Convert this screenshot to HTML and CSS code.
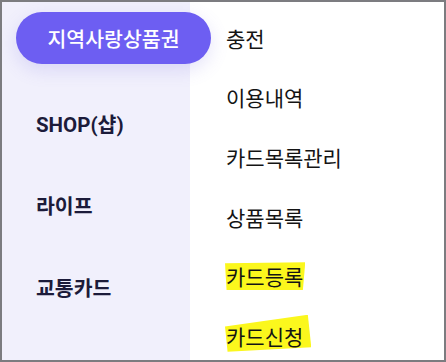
FILE: index.html
```html
<!DOCTYPE html>
<html lang="ko">
<head>
<meta charset="utf-8">
<link rel="stylesheet" href="styles.css">
</head>
<body>
<div class="frame">
  <nav class="side">
    <div class="pill">지역사랑상품권</div>
    <div class="side-item">SHOP(샵)</div>
    <div class="side-item">라이프</div>
    <div class="side-item">교통카드</div>
  </nav>
  <ul class="menu">
    <li class="menu-item">충전</li>
    <li class="menu-item">이용내역</li>
    <li class="menu-item">카드목록관리</li>
    <li class="menu-item">상품목록</li>
    <li class="menu-item"><span class="mark mark-a">카드등록</span></li>
    <li class="menu-item"><span class="mark mark-b">카드신청</span></li>
  </ul>
</div>
</body>
</html>
```

FILE: styles.css
```css
html, body {
  margin: 0;
  padding: 0;
  background: #ffffff;
}
body {
  font-family: "Roboto", "Noto Sans CJK KR", sans-serif;
}
.frame {
  box-sizing: border-box;
  width: 446px;
  height: 362px;
  border: 2px solid #7c7c80;
  display: grid;
  grid-template-columns: 188px 1fr;
  overflow: hidden;
  background: #ffffff;
}
.side {
  background: #f1f0fc;
  display: flex;
  flex-direction: column;
  position: relative;
  z-index: 2;
}
.pill {
  box-sizing: border-box;
  margin: 10px 0 18px 14px;
  width: 195px;
  height: 52px;
  border-radius: 26px;
  background: #6d5ef2;
  color: #ffffff;
  font-size: 20.5px;
  font-weight: 500;
  display: flex;
  align-items: center;
  justify-content: center;
  box-shadow: 0 6px 18px rgba(110, 100, 220, 0.18);
  flex: none;
}
.side-item {
  height: 82px;
  display: flex;
  align-items: center;
  padding-left: 34px;
  font-size: 20.5px;
  font-weight: 700;
  color: #1c1b3a;
}
.menu {
  list-style: none;
  margin: 0;
  padding: 6px 0 0 36px;
  display: flex;
  flex-direction: column;
}
.menu-item {
  height: 59.6px;
  display: flex;
  align-items: center;
  font-size: 21px;
  font-weight: 400;
  color: #141414;
}
.mark {
  position: relative;
  z-index: 0;
}
.mark::before {
  content: "";
  position: absolute;
  z-index: -1;
  background: #fbf71d;
}
.mark-a::before {
  left: -1px;
  right: -2px;
  top: 1px;
  bottom: 1px;
  clip-path: polygon(0 4%, 100% 0, 97% 100%, 2% 100%);
}
.mark-b::before {
  left: -1px;
  right: -8px;
  top: -6px;
  bottom: -1px;
  clip-path: polygon(0 32%, 96% 0, 100% 88%, 3% 100%);
}
```
